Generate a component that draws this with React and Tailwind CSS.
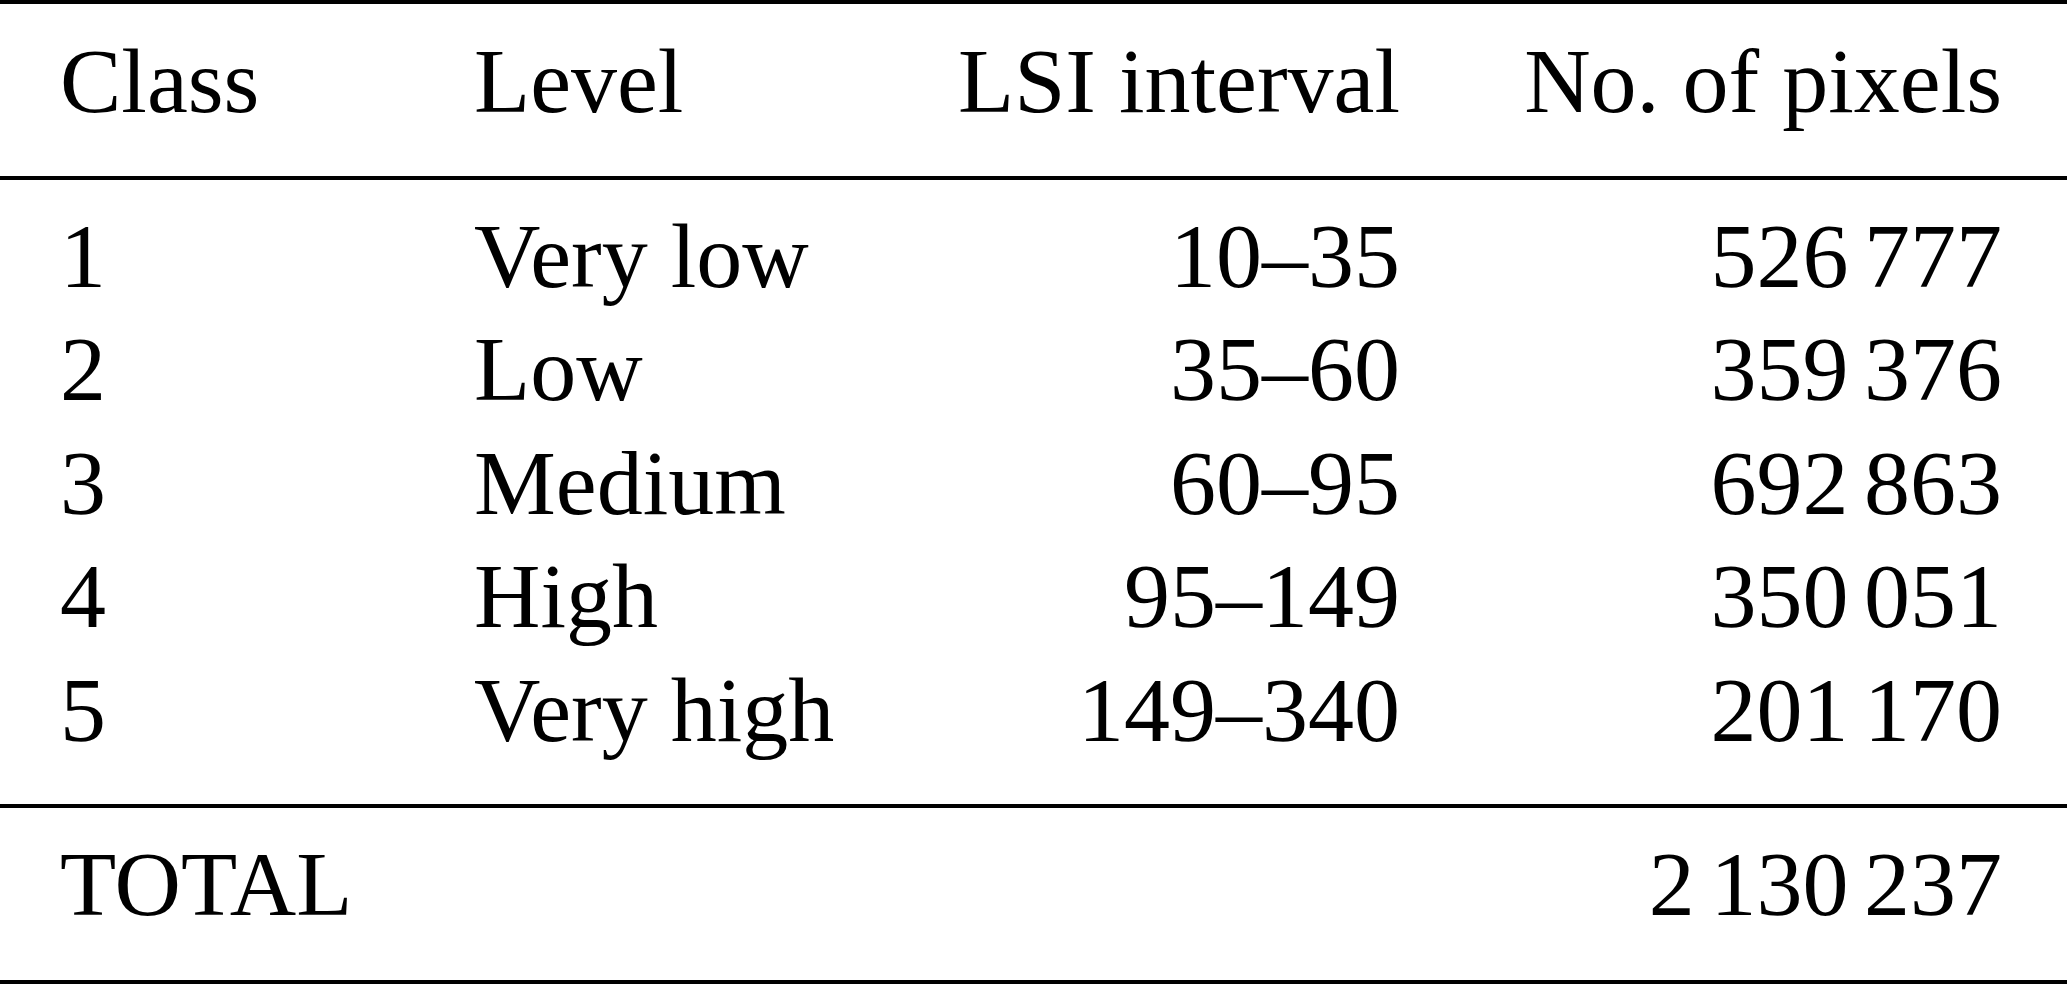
const ROWS = [
  { cls: '1', level: 'Very low', lsi: '10–35', px: ['526', '777'] },
  { cls: '2', level: 'Low', lsi: '35–60', px: ['359', '376'] },
  { cls: '3', level: 'Medium', lsi: '60–95', px: ['692', '863'] },
  { cls: '4', level: 'High', lsi: '95–149', px: ['350', '051'] },
  { cls: '5', level: 'Very high', lsi: '149–340', px: ['201', '170'] },
]

// number with a thin-space group separator, like siunitx
function Num({ groups }) {
  return (
    <span>
      {groups.map((g, i) => (
        <span key={i}>
          {i > 0 && <span className="inline-block w-[0.17em]" />}
          {g}
        </span>
      ))}
    </span>
  )
}

function Row({ children, tall }) {
  return (
    <div
      className={
        tall
          ? 'grid grid-cols-[414px_398px_1fr_602px] leading-[113.4px] whitespace-nowrap'
          : 'grid grid-cols-[414px_398px_1fr_602px] leading-[113px] whitespace-nowrap'
      }
    >
      {children}
    </div>
  )
}

export default function App() {
  return (
    <div className="w-[2067px] h-[984px] overflow-hidden bg-white text-black font-['Liberation_Serif','Times_New_Roman',serif] text-[92px]">
      {/* Header */}
      <div className="border-t-4 border-black pt-[21px] pb-[38px] pl-[60px] pr-[65px]">
        <Row>
          <div>Class</div>
          <div>Level</div>
          <div className="text-right">LSI interval</div>
          <div className="text-right">No. of pixels</div>
        </Row>
      </div>

      {/* Body */}
      <div className="border-t-4 border-black pt-[20px] pb-[37px] pl-[60px] pr-[65px]">
        {ROWS.map((r) => (
          <Row key={r.cls} tall>
            <div>{r.cls}</div>
            <div>{r.level}</div>
            <div className="text-right">{r.lsi}</div>
            <div className="text-right">
              <Num groups={r.px} />
            </div>
          </Row>
        ))}
      </div>

      {/* Total */}
      <div className="border-t-4 border-b-4 border-black pt-[20px] pb-[39px] pl-[60px] pr-[65px]">
        <Row>
          <div>TOTAL</div>
          <div></div>
          <div></div>
          <div className="text-right">
            <Num groups={['2', '130', '237']} />
          </div>
        </Row>
      </div>
    </div>
  )
}
